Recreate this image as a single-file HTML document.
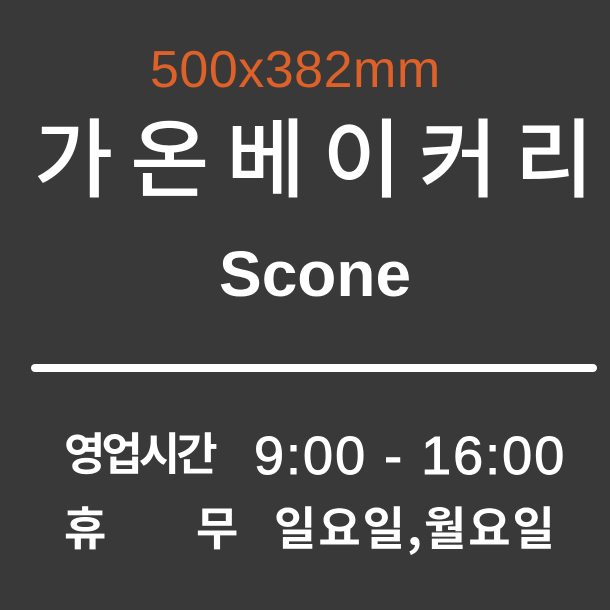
<!DOCTYPE html>
<html><head><meta charset="utf-8"><style>
html,body{margin:0;padding:0}
body{width:610px;height:610px;background:#393939;position:relative;overflow:hidden;font-family:"Liberation Sans","Noto Sans CJK KR",sans-serif;color:#fff}
.a{position:absolute;white-space:nowrap;line-height:1}
.k{font-family:'Noto Sans CJK KR',sans-serif;font-weight:bold}
</style></head><body>
<div class="a" style="left:150px;top:44px;font-size:52px;color:#dd6128;letter-spacing:0.5px">500x382mm</div>
<div class="a" style="left:34px;top:110px;font-size:86px;font-weight:500;letter-spacing:17px;font-family:'Noto Sans CJK KR',sans-serif">가온베이커리</div>
<div class="a" style="left:219px;top:242px;font-size:64px;font-weight:bold">Scone</div>
<div style="position:absolute;left:31px;top:364px;width:566px;height:8px;border-radius:4px;background:#fff"></div>
<div class="a k" style="left:64px;top:428px;font-size:45px;letter-spacing:-4px">영업시간</div>
<div class="a" style="left:254px;top:429px;font-size:54px;letter-spacing:2px;-webkit-text-stroke:1px #fff">9:00 - 16:00</div>
<div class="a k" style="left:64px;top:503px;font-size:46px">휴</div>
<div class="a k" style="left:196px;top:503px;font-size:46px">무</div>
<div class="a k" style="left:274px;top:503px;font-size:46px;letter-spacing:2px">일요일,월요일</div>
</body></html>
